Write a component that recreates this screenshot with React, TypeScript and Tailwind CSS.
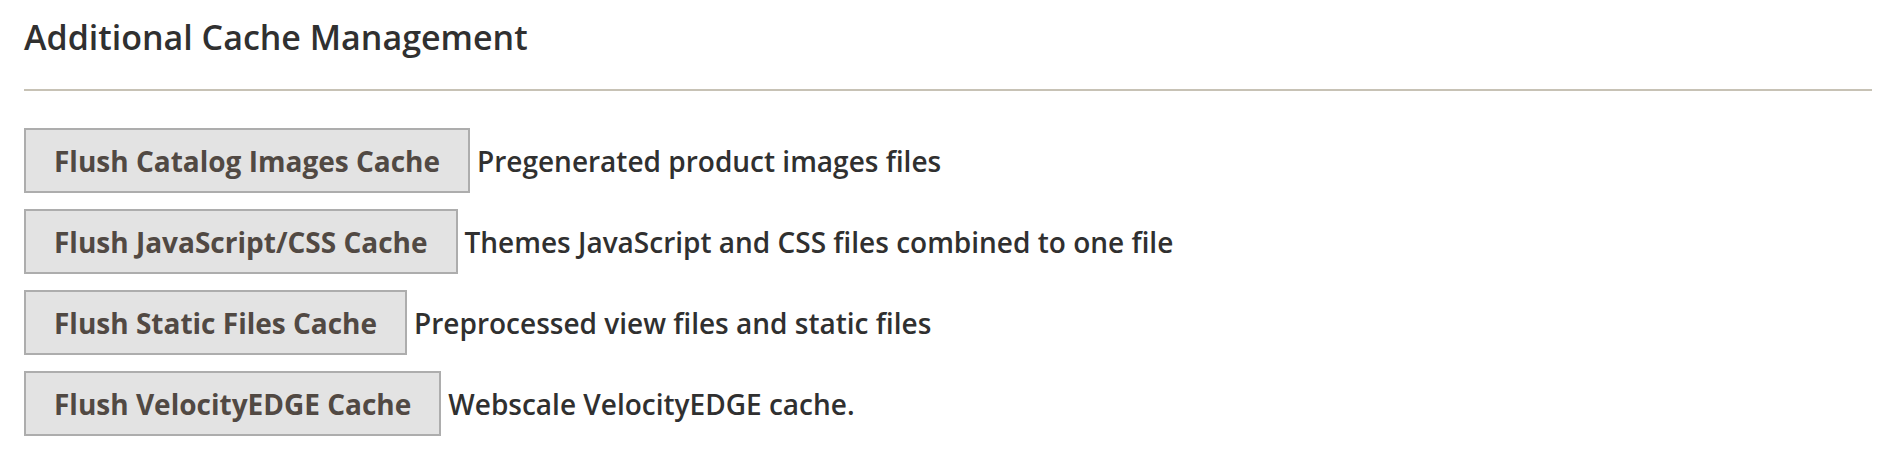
import React from 'react';

interface CacheAction {
  label: string;
  description: string;
}

const actions: CacheAction[] = [
  { label: 'Flush Catalog Images Cache', description: 'Pregenerated product images files' },
  { label: 'Flush JavaScript/CSS Cache', description: 'Themes JavaScript and CSS files combined to one file' },
  { label: 'Flush Static Files Cache', description: 'Preprocessed view files and static files' },
  { label: 'Flush VelocityEDGE Cache', description: 'Webscale VelocityEDGE cache.' },
];

export default function App() {
  return (
    <div className="min-h-screen bg-white pl-6 pr-7 font-['Open_Sans',sans-serif]">
      <h2 className="pt-[14px] pb-[29px] text-[34px] leading-[46px] font-semibold text-[#303030]">
        Additional Cache Management
      </h2>
      <div className="h-[2px] bg-[#c7c2b5]" />
      <div className="flex flex-col gap-4 pt-[37px]">
        {actions.map((action) => (
          <div key={action.label} className="flex items-center">
            <button
              type="button"
              className="h-[65px] border-2 border-[#adadad] bg-[#e3e3e3] px-[28px] text-[28px] font-bold text-[#514943]"
            >
              {action.label}
            </button>
            <span className="ml-[7px] text-[28px] font-semibold text-[#303030]">
              {action.description}
            </span>
          </div>
        ))}
      </div>
    </div>
  );
}
